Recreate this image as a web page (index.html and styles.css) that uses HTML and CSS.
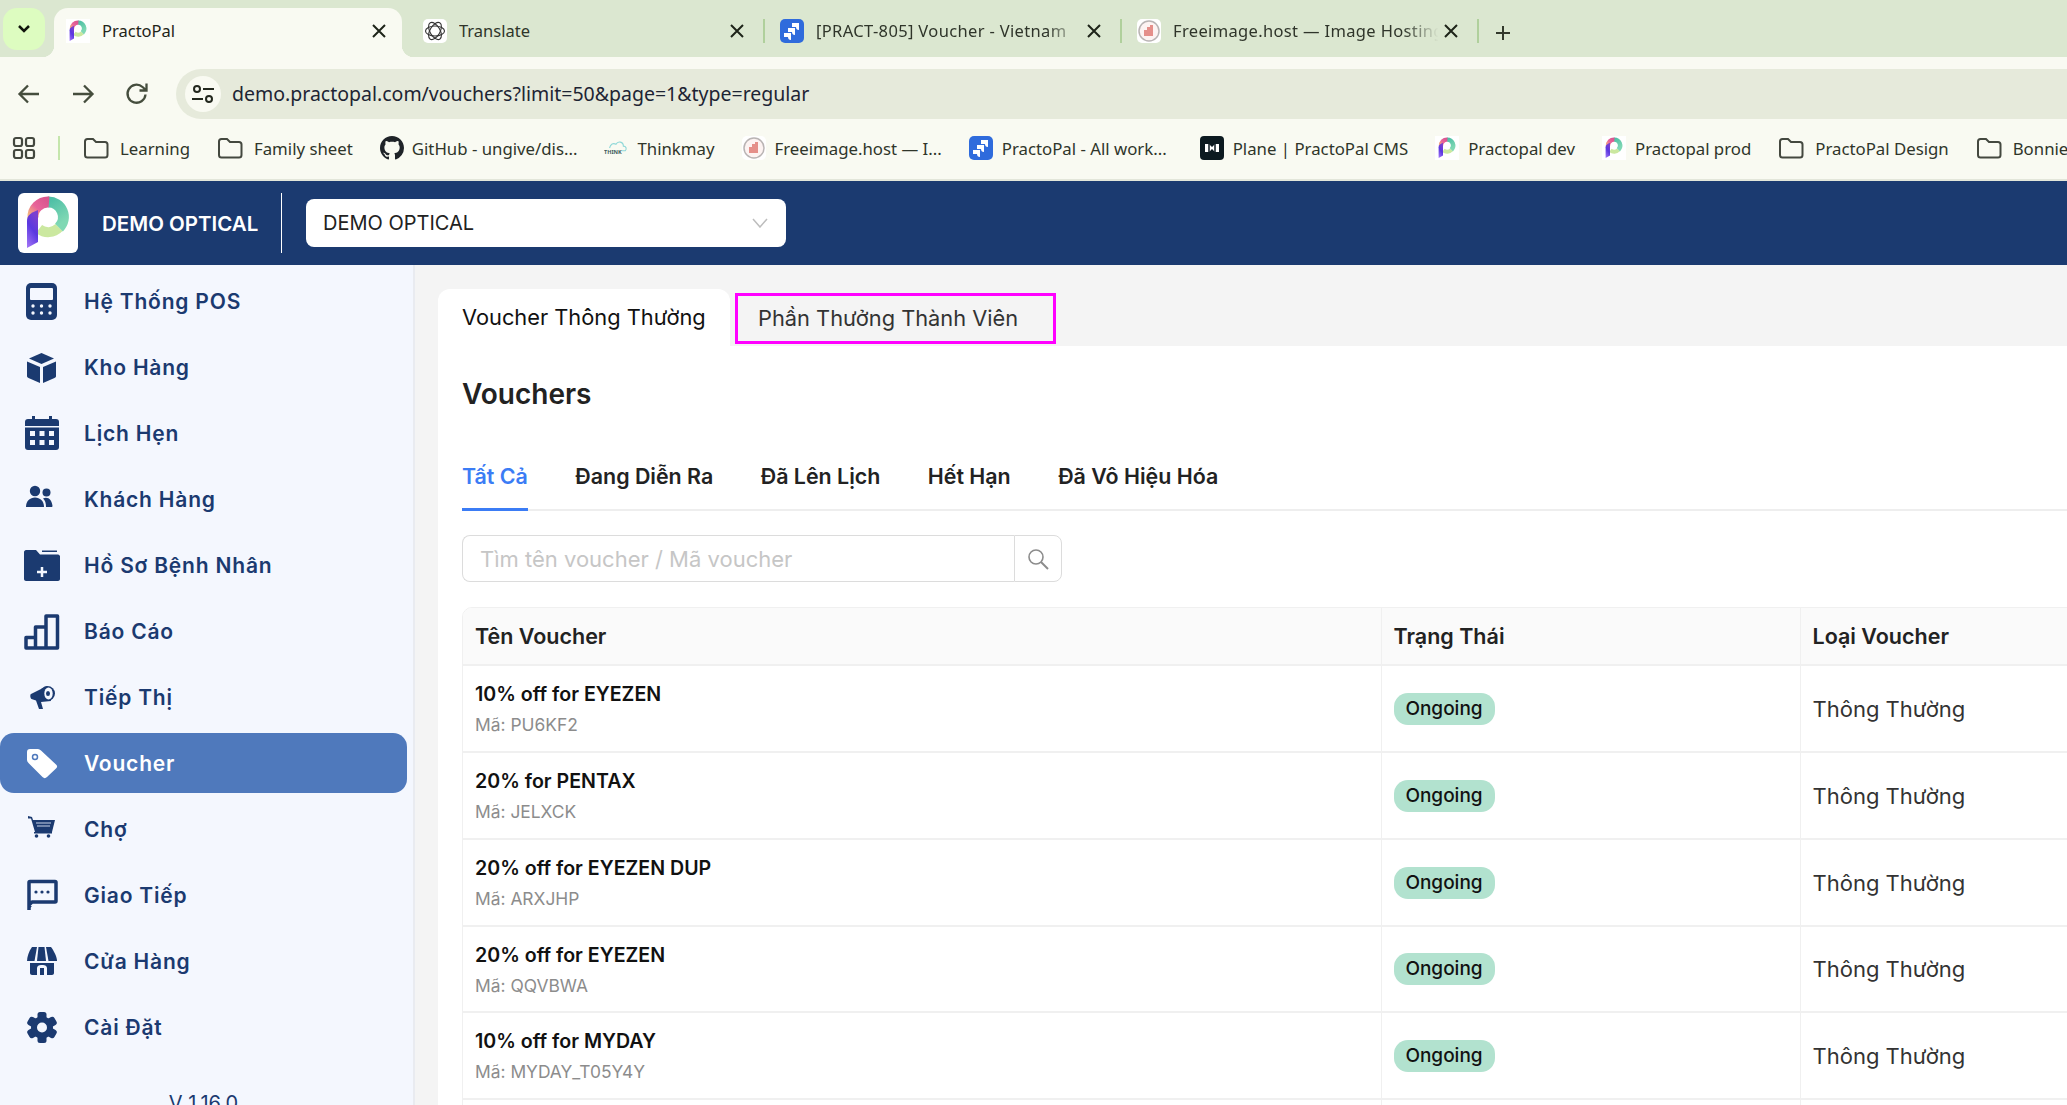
FILE: index.html
```html
<!DOCTYPE html>
<html lang="vi">
<head>
  <meta charset="UTF-8" />
  <title>PractoPal - Vouchers</title>
  <link rel="stylesheet" href="styles.css">
</head>
<body>

<svg class="defs" width="0" height="0">
  <defs>
    <linearGradient id="stem-grad" x1="0" y1="1" x2="0.4" y2="0">
      <stop offset="0" stop-color="#a678f7"/>
      <stop offset="0.6" stop-color="#5a38e0"/>
      <stop offset="1" stop-color="#7a3fd0"/>
    </linearGradient>
    <linearGradient id="pink-grad" x1="0" y1="1" x2="1" y2="0">
      <stop offset="0" stop-color="#f3b27e"/>
      <stop offset="0.45" stop-color="#e8649a"/>
      <stop offset="1" stop-color="#d9568f"/>
    </linearGradient>
    <linearGradient id="teal-grad" x1="0" y1="0" x2="0.4" y2="1">
      <stop offset="0" stop-color="#4fbfa6"/>
      <stop offset="1" stop-color="#7fd8b4"/>
    </linearGradient>
    <symbol id="logo" viewBox="0 0 60 60">
      <path d="M41 34.600A15 15 0 0 1 21 36" fill="none" stroke="#cbe8a0" stroke-width="10"/>
      <path d="M30 9A15 15 0 0 1 41 34.600" fill="none" stroke="url(#teal-grad)" stroke-width="11"/>
      <path d="M15 25A15 15 0 0 1 31 9" fill="none" stroke="url(#pink-grad)" stroke-width="11"/>
      <path d="M9 55V28C9 23 12 20 20 17V49Z" fill="url(#stem-grad)"/>
    </symbol>
    <symbol id="folder" viewBox="0 0 26 24">
      <path d="M2 5.500C2 4 3 3 4.500 3H10L13 6H22C23.500 6 24.500 7 24.500 8.500V19C24.500 20.500 23.500 21.500 22 21.500H4.500C3 21.500 2 20.500 2 19Z" fill="none" stroke="#44483f" stroke-width="2"/>
    </symbol>
    <symbol id="jira" viewBox="0 0 24 24">
      <rect width="24" height="24" rx="5" fill="#2f6bdc"/>
      <path d="M12 4h7v7c-2 0-3-1-3-3h-4zM8 9h7v7c-2 0-3-1-3-3H8zM4 14h7v7c-2 0-3-1-3-3H4z" fill="#fff"/>
    </symbol>
    <symbol id="freeimage" viewBox="0 0 24 24">
      <rect width="24" height="24" rx="5" fill="#fff"/>
      <circle cx="12" cy="12" r="10" fill="#fdf3f2" stroke="#b9b4b4" stroke-width="1.500"/>
      <path d="M7 17V11h3V8h3V6h3v11z" fill="#e58f8a"/>
    </symbol>
    <symbol id="openai" viewBox="0 0 24 24">
      <rect width="24" height="24" rx="5" fill="#fff"/>
      <g fill="none" stroke="#333" stroke-width="1.100">
        <ellipse cx="12" cy="12" rx="9.500" ry="5"/>
        <ellipse cx="12" cy="12" rx="9.500" ry="5" transform="rotate(60 12 12)"/>
        <ellipse cx="12" cy="12" rx="9.500" ry="5" transform="rotate(120 12 12)"/>
      </g>
    </symbol>
    <symbol id="close" viewBox="0 0 20 20">
      <path d="M4 4L16 16M16 4L4 16" fill="none" stroke="#1e2419" stroke-width="2"/>
    </symbol>
  </defs>
</svg>

<div class="browser">
  <div class="tabstrip">
    <div class="tab-search">
      <svg width="16" height="10" viewBox="0 0 16 10"><path d="M3 2L8 7L13 2" fill="none" stroke="#10140c" stroke-width="2.500"/></svg>
    </div>
    <div class="tab tab-active">
      <svg class="favicon"><rect width="24" height="24" fill="#fff"/><use href="#logo"/></svg>
      <span class="tab-title">PractoPal</span>
      <svg class="tab-close"><use href="#close"/></svg>
    </div>
    <div class="tab">
      <svg class="favicon"><use href="#openai"/></svg>
      <span class="tab-title">Translate</span>
      <svg class="tab-close"><use href="#close"/></svg>
      <span class="tab-sep"></span>
    </div>
    <div class="tab">
      <svg class="favicon"><use href="#jira"/></svg>
      <span class="tab-title tab-fade">[PRACT-805] Voucher - Vietnam</span>
      <svg class="tab-close"><use href="#close"/></svg>
      <span class="tab-sep"></span>
    </div>
    <div class="tab">
      <svg class="favicon"><use href="#freeimage"/></svg>
      <span class="tab-title tab-fade">Freeimage.host — Image Hosting</span>
      <svg class="tab-close"><use href="#close"/></svg>
      <span class="tab-sep"></span>
    </div>
    <svg class="tab-new" width="20" height="20" viewBox="0 0 20 20"><path d="M10 3V17M3 10H17" stroke="#33392c" stroke-width="2"/></svg>
  </div>

  <div class="toolbar">
    <svg class="tool-btn" viewBox="0 0 24 24"><path d="M22 12H3M11 3.500L2.500 12L11 20.500" fill="none" stroke="#454d3d" stroke-width="2.300"/></svg>
    <svg class="tool-btn" viewBox="0 0 24 24"><path d="M2 12H21M13 3.500L21.500 12L13 20.500" fill="none" stroke="#454d3d" stroke-width="2.300"/></svg>
    <svg class="tool-btn" viewBox="0 0 24 24"><path d="M20.500 12.500A9 9 0 1 1 17.500 5L21 8M21.500 1.500V8.500H14.500" fill="none" stroke="#454d3d" stroke-width="2.300"/></svg>
    <div class="omnibox">
      <div class="site-chip">
        <svg width="24" height="24" viewBox="0 0 24 24">
          <g fill="none" stroke="#23281e" stroke-width="2">
            <circle cx="6" cy="7" r="3"/><path d="M12 7H23"/>
            <circle cx="18" cy="17" r="3"/><path d="M1 17H12"/>
          </g>
        </svg>
      </div>
      <span class="url">demo.practopal.com/vouchers?limit=50&amp;page=1&amp;type=regular</span>
    </div>
  </div>

  <div class="bookmarks">
    <svg class="apps" width="24" height="24" viewBox="0 0 24 24">
      <g fill="none" stroke="#44483f" stroke-width="2.200">
        <rect x="2" y="2" width="8" height="8" rx="2"/><rect x="14" y="2" width="8" height="8" rx="2"/>
        <rect x="2" y="14" width="8" height="8" rx="2"/><rect x="14" y="14" width="8" height="8" rx="2"/>
      </g>
    </svg>
    <span class="bm-sep"></span>
    <a class="bm"><svg class="bm-folder"><use href="#folder"/></svg>Learning</a>
    <a class="bm"><svg class="bm-folder"><use href="#folder"/></svg>Family sheet</a>
    <a class="bm bm-github">
      <svg class="bm-icon" viewBox="0 0 16 16"><path fill="#1f2328" d="M8 0C3.580 0 0 3.580 0 8c0 3.540 2.290 6.530 5.470 7.590.4.070.55-.17.55-.38 0-.19-.01-.82-.01-1.490-2.010.37-2.530-.49-2.690-.94-.09-.23-.48-.94-.82-1.130-.28-.15-.68-.52-.01-.53.63-.01 1.080.58 1.230.82.72 1.210 1.870.87 2.330.66.07-.52.28-.87.51-1.070-1.780-.2-3.640-.89-3.640-3.950 0-.87.31-1.590.82-2.150-.08-.2-.36-1.020.08-2.120 0 0 .67-.21 2.200.82.64-.18 1.320-.27 2-.27.68 0 1.360.09 2 .27 1.530-1.040 2.200-.82 2.200-.82.44 1.100.16 1.920.08 2.120.51.56.82 1.270.82 2.150 0 3.070-1.870 3.750-3.650 3.950.29.25.54.73.54 1.480 0 1.070-.01 1.930-.01 2.200 0 .21.15.46.55.38A8.013 8.013 0 0016 8c0-4.420-3.580-8-8-8z"/></svg>
      GitHub - ungive/dis...
    </a>
    <a class="bm bm-think">
      <svg class="bm-icon" viewBox="0 0 26 24">
        <path d="M6 12C7 8 10 6 13 8C15 4 21 5 21 10C24 10 25 13 23 15H19" fill="none" stroke="#8fd8d8" stroke-width="1.200"/>
        <text x="0" y="18" class="think-label">THINK</text>
      </svg>
      Thinkmay
    </a>
    <a class="bm"><svg class="bm-icon"><use href="#freeimage"/></svg>Freeimage.host — I...</a>
    <a class="bm bm-jira"><svg class="bm-icon"><use href="#jira"/></svg>PractoPal - All work...</a>
    <a class="bm">
      <svg class="bm-icon" viewBox="0 0 24 24">
        <rect width="24" height="24" rx="4" fill="#0c1a20"/>
        <path d="M5 8h4l3 3 3-3h4v8h-4l-3-3-3 3H5z" fill="#fff"/>
        <path d="M9 8v8M15 8v8" stroke="#0c1a20" stroke-width="1.500"/>
      </svg>
      Plane | PractoPal CMS
    </a>
    <a class="bm"><svg class="bm-icon"><rect width="24" height="24" fill="#fff"/><use href="#logo"/></svg>Practopal dev</a>
    <a class="bm"><svg class="bm-icon"><rect width="24" height="24" fill="#fff"/><use href="#logo"/></svg>Practopal prod</a>
    <a class="bm"><svg class="bm-folder"><use href="#folder"/></svg>PractoPal Design</a>
    <a class="bm"><svg class="bm-folder"><use href="#folder"/></svg>Bonnie</a>
  </div>
</div>

<header class="app-header">
  <div class="app-logo"><svg width="60" height="60"><use href="#logo"/></svg></div>
  <div class="org-name">DEMO OPTICAL</div>
  <span class="header-divider"></span>
  <div class="org-select">
    <span>DEMO OPTICAL</span>
    <svg width="16" height="10" viewBox="0 0 16 10"><path d="M1 1L8 9L15 1" fill="none" stroke="#bdbdbd" stroke-width="1.500"/></svg>
  </div>
</header>

<div class="app-body">
  <nav class="sidebar">
    <a class="nav-item">
      <svg class="nav-icon" viewBox="0 0 36 36">
        <rect x="3" y="0" width="31" height="37" rx="5"/>
        <rect x="7" y="5" width="23" height="12" rx="1" class="cut"/>
        <g class="cut">
          <circle cx="10" cy="23" r="1.700"/><circle cx="18.500" cy="23" r="1.700"/><circle cx="27" cy="23" r="1.700"/>
          <circle cx="10" cy="30" r="1.700"/><circle cx="18.500" cy="30" r="1.700"/><circle cx="27" cy="30" r="1.700"/>
        </g>
      </svg>
      <span>Hệ Thống POS</span>
    </a>
    <a class="nav-item">
      <svg class="nav-icon" viewBox="0 0 36 36">
        <path d="M18.500 4L31 9.500L18.500 15L6 9.500Z"/>
        <path d="M4 12.500L17 18V34L5.500 29C4.500 28.500 4 28 4 27Z"/>
        <path d="M33 12.500L20 18V34L31.500 29C32.500 28.500 33 28 33 27Z"/>
      </svg>
      <span>Kho Hàng</span>
    </a>
    <a class="nav-item">
      <svg class="nav-icon" viewBox="0 0 36 36">
        <rect x="2" y="4" width="34" height="31" rx="3"/>
        <rect x="9" y="1" width="3" height="6"/><rect x="26" y="1" width="3" height="6"/>
        <rect x="2" y="11" width="34" height="1.500" class="cut"/>
        <g class="cut">
          <rect x="7" y="16" width="5" height="5"/><rect x="16.500" y="16" width="5" height="5"/><rect x="26" y="16" width="5" height="5"/>
          <rect x="7" y="25" width="5" height="5"/><rect x="16.500" y="25" width="5" height="5"/><rect x="26" y="25" width="5" height="5"/>
        </g>
      </svg>
      <span>Lịch Hẹn</span>
    </a>
    <a class="nav-item">
      <svg class="nav-icon" viewBox="0 0 36 36">
        <circle cx="12" cy="10" r="5.200"/><circle cx="23.500" cy="11.500" r="4"/>
        <path d="M3 26C3 20 7 16.500 12 16.500S21 20 21 26Z"/>
        <path d="M23 26C23 22 22 19 20 17.500C25 15 29 19 29.500 25C29.500 25.700 29 26 28.500 26Z"/>
      </svg>
      <span>Khách Hàng</span>
    </a>
    <a class="nav-item">
      <svg class="nav-icon" viewBox="0 0 36 36">
        <path d="M1 5C1 4 2 3 3 3H13L17 7.500H35C36 7.500 37 8.500 37 9.500V32C37 33 36 34 35 34H3C2 34 1 33 1 32Z"/>
        <rect x="19" y="3.500" width="15" height="1.500"/>
        <path d="M19 20V30M14 25H24" class="cut-line"/>
      </svg>
      <span>Hồ Sơ Bệnh Nhân</span>
    </a>
    <a class="nav-item">
      <svg class="nav-icon" viewBox="0 0 36 36">
        <path d="M3 24.500H12.500V14H23V3H34.500V35H3ZM12.500 35V24.500M23 35V14" fill="none" class="stroke-line"/>
      </svg>
      <span>Báo Cáo</span>
    </a>
    <a class="nav-item">
      <svg class="nav-icon" viewBox="0 0 36 36">
        <path d="M8 15C7 15.500 7 19 8.500 20L13 21.500L16 30H20L18 23L28 22L24 7Z"/>
        <circle cx="24.500" cy="14.500" r="7.500"/>
        <ellipse cx="25.500" cy="14.500" rx="4.200" ry="6" class="cut"/>
        <ellipse cx="25" cy="14.500" rx="2" ry="2.500"/>
      </svg>
      <span>Tiếp Thị</span>
    </a>
    <a class="nav-item nav-active">
      <svg class="nav-icon" viewBox="0 0 36 36">
        <path d="M4 7C4 5 5 4 7 4H15C16 4 17 4.500 18 5.500L33 19.500C34.500 21 34.500 22 33 23.500L24 32C22.500 33.500 21 33.500 19.500 32L5.500 18C4.500 17 4 16 4 15Z"/>
        <circle cx="12" cy="12" r="2.500" class="tag-hole"/>
      </svg>
      <span>Voucher</span>
    </a>
    <a class="nav-item">
      <svg class="nav-icon" viewBox="0 0 36 36">
        <path d="M5 5L9 6L10 9H32L29 21H12L8 7.500L5 7.500Z"/>
        <rect x="11" y="21" width="18" height="1.500"/>
        <path d="M13 12H28M14 15H27" class="cut-thin"/>
        <circle cx="13.500" cy="25" r="1.800"/><circle cx="25.500" cy="25" r="1.800"/>
      </svg>
      <span>Chợ</span>
    </a>
    <a class="nav-item">
      <svg class="nav-icon" viewBox="0 0 36 36">
        <path d="M6 33V5.500C6 5 6.500 4.500 7 4.500H32C32.500 4.500 33 5 33 5.500V24C33 24.500 32.500 25 32 25H9L6 28" fill="none" class="stroke-line"/>
        <path d="M5 33V29H9Z"/>
        <circle cx="13" cy="15" r="1.600"/><circle cx="19" cy="15" r="1.600"/><circle cx="25" cy="15" r="1.600"/>
      </svg>
      <span>Giao Tiếp</span>
    </a>
    <a class="nav-item">
      <svg class="nav-icon" viewBox="0 0 36 36">
        <path d="M9 4H14L11.500 18H4C4 14 6 8 9 4Z"/>
        <path d="M15.500 4H21.500L23 18H14Z"/>
        <path d="M23 4H28C31 8 34 14 34 18H25.500Z"/>
        <path d="M7 20H31V30C31 31 30 32 29 32H24V25C24 23 22 22 20 22H18C16 22 14 23 14 25V32H9C8 32 7 31 7 30Z"/>
        <rect x="17" y="25" width="4" height="7"/>
      </svg>
      <span>Cửa Hàng</span>
    </a>
    <a class="nav-item">
      <svg class="nav-icon" viewBox="0 0 36 36">
        <g>
          <rect x="14.500" y="3" width="9" height="31" rx="2.500"/>
          <rect x="14.500" y="3" width="9" height="31" rx="2.500" transform="rotate(60 19 18.500)"/>
          <rect x="14.500" y="3" width="9" height="31" rx="2.500" transform="rotate(120 19 18.500)"/>
          <circle cx="19" cy="18.500" r="11"/>
        </g>
        <circle cx="19" cy="18.500" r="5" class="cut"/>
      </svg>
      <span>Cài Đặt</span>
    </a>
    <div class="version">V 1.16.0</div>
  </nav>

  <main class="content">
    <div class="page-tabs">
      <div class="page-tab page-tab-active">Voucher Thông Thường</div>
      <div class="page-tab page-tab-marked">Phần Thưởng Thành Viên</div>
    </div>
    <div class="card">
      <h1 class="card-title">Vouchers</h1>
      <div class="status-tabs">
        <a class="status-tab status-active">Tất Cả</a>
        <a class="status-tab">Đang Diễn Ra</a>
        <a class="status-tab">Đã Lên Lịch</a>
        <a class="status-tab">Hết Hạn</a>
        <a class="status-tab">Đã Vô Hiệu Hóa</a>
      </div>
      <div class="search-box">
        <input class="search-input" placeholder="Tìm tên voucher / Mã voucher" />
        <button class="search-btn">
          <svg width="24" height="24" viewBox="0 0 24 24"><circle cx="10" cy="10" r="7" fill="none" stroke="#8c8c8c" stroke-width="1.600"/><path d="M15 15L22 22" stroke="#8c8c8c" stroke-width="2"/></svg>
        </button>
      </div>
      <div class="table-wrap">
        <table class="voucher-table">
          <colgroup><col class="col-name"><col class="col-status"><col></colgroup>
          <thead>
            <tr><th>Tên Voucher</th><th>Trạng Thái</th><th>Loại Voucher</th></tr>
          </thead>
          <tbody>
            <tr>
              <td><div class="v-name">10% off for EYEZEN</div><div class="v-code">Mã: PU6KF2</div></td>
              <td><span class="badge">Ongoing</span></td>
              <td class="v-type">Thông Thường</td>
            </tr>
            <tr>
              <td><div class="v-name">20% for PENTAX</div><div class="v-code">Mã: JELXCK</div></td>
              <td><span class="badge">Ongoing</span></td>
              <td class="v-type">Thông Thường</td>
            </tr>
            <tr>
              <td><div class="v-name">20% off for EYEZEN DUP</div><div class="v-code">Mã: ARXJHP</div></td>
              <td><span class="badge">Ongoing</span></td>
              <td class="v-type">Thông Thường</td>
            </tr>
            <tr class="row-short">
              <td><div class="v-name">20% off for EYEZEN</div><div class="v-code">Mã: QQVBWA</div></td>
              <td><span class="badge">Ongoing</span></td>
              <td class="v-type">Thông Thường</td>
            </tr>
            <tr>
              <td><div class="v-name">10% off for MYDAY</div><div class="v-code">Mã: MYDAY_T05Y4Y</div></td>
              <td><span class="badge">Ongoing</span></td>
              <td class="v-type">Thông Thường</td>
            </tr>
            <tr><td></td><td></td><td></td></tr>
          </tbody>
        </table>
      </div>
    </div>
  </main>
</div>

</body>
</html>
```
FILE: styles.css
```css
html, body {
  margin: 0;
  height: 1105px;
  overflow: hidden;
}
body {
  width: 2067px;
  font-family: 'Inter', 'Noto Sans', sans-serif;
  background-color: #f4f4f4;
  color: #222;
}
.defs {
  position: absolute;
}

/* browser frame */
.browser {
  font-family: 'Noto Sans', 'Open Sans', sans-serif;
  background-color: #f9faf2;
  color: #2f352a;
}
.tabstrip {
  display: flex;
  align-items: flex-end;
  height: 57px;
  padding-left: 3px;
  background-color: #dbe7d0;
}
.tab-search {
  display: flex;
  align-items: center;
  justify-content: center;
  width: 42px;
  height: 42px;
  margin: 0 9px 7px 0;
  border-radius: 14px;
  background-color: #ddfcc0;
}
.tab {
  display: flex;
  align-items: center;
  box-sizing: border-box;
  width: 357px;
  height: 49px;
  padding: 0 3px 4px 12px;
  font-size: 16.500px;
}
.tab-active {
  position: relative;
  width: 348px;
  margin-right: 9px;
  padding-right: 13px;
  border-radius: 14px 14px 0 0;
  background-color: #f9faf2;
  color: #1f2419;
}
.tab-active::before,
.tab-active::after {
  content: "";
  position: absolute;
  bottom: 0;
  width: 12px;
  height: 12px;
}
.tab-active::before {
  left: -12px;
  background: radial-gradient(circle at 0 0, transparent 12px, #f9faf2 12.500px);
}
.tab-active::after {
  right: -12px;
  background: radial-gradient(circle at 100% 0, transparent 12px, #f9faf2 12.500px);
}
.favicon {
  width: 24px;
  height: 24px;
  margin-right: 12px;
  flex: none;
}
.tab-title {
  flex: 1;
  overflow: hidden;
  white-space: nowrap;
}
.tab-fade {
  letter-spacing: 0.350px;
  -webkit-mask-image: linear-gradient(to right, #000 86%, transparent 99%);
  mask-image: linear-gradient(to right, #000 86%, transparent 99%);
}
.tab-close {
  width: 20px;
  height: 20px;
  flex: none;
}
.tab-sep {
  width: 2px;
  height: 24px;
  margin-left: 16px;
  flex: none;
  background-color: #b0d09c;
}
.tab-new {
  margin: 0 0 14px 11px;
  flex: none;
}

.toolbar {
  display: flex;
  align-items: center;
  gap: 30px;
  box-sizing: border-box;
  height: 65px;
  padding: 8px 0 0 17px;
  overflow: hidden;
}
.tool-btn {
  width: 24px;
  height: 24px;
  flex: none;
}
.omnibox {
  display: flex;
  align-items: center;
  gap: 11px;
  flex: none;
  width: 2000px;
  height: 50px;
  margin-left: -3px;
  padding-left: 9px;
  border-radius: 25px 0 0 25px;
  background-color: #e6eadb;
  font-size: 19.500px;
  color: #1d2433;
}
.site-chip {
  display: flex;
  align-items: center;
  justify-content: center;
  width: 36px;
  height: 36px;
  border-radius: 50%;
  background-color: #f9faf2;
}

.bookmarks {
  display: flex;
  align-items: center;
  box-sizing: border-box;
  height: 59px;
  padding: 0 0 5px 12px;
  overflow: hidden;
  border-bottom: 2px solid #e3e6da;
  font-size: 16.800px;
  white-space: nowrap;
}
.apps {
  flex: none;
}
.bm-sep {
  width: 2px;
  height: 24px;
  margin: 0 23px 0 22px;
  flex: none;
  background-color: #c5e6ac;
}
.bm {
  display: flex;
  align-items: center;
  margin-right: 27px;
  flex: none;
}
.bm-folder {
  width: 26px;
  height: 24px;
  margin-right: 11px;
}
.bm-icon {
  width: 24px;
  height: 24px;
  margin-right: 9px;
}
.bm-github .bm-icon {
  margin-right: 8px;
}
.bm-jira {
  margin-right: 33px;
}
.think-label {
  font-size: 6px;
  font-weight: 700;
  fill: #3c5a5a;
}

/* app header */
.app-header {
  display: flex;
  align-items: center;
  height: 84px;
  padding-left: 18px;
  background-color: #1b3a70;
}
.app-logo {
  width: 60px;
  height: 60px;
  margin-right: 24px;
  border-radius: 6px;
  background-color: #fff;
}
.org-name {
  width: 179px;
  font-size: 20.500px;
  font-weight: 600;
  color: #fff;
  white-space: nowrap;
}
.header-divider {
  width: 1px;
  height: 60px;
  margin-right: 24px;
  background-color: #fff;
}
.org-select {
  display: flex;
  align-items: center;
  justify-content: space-between;
  box-sizing: border-box;
  width: 480px;
  height: 48px;
  padding: 0 18px 0 17px;
  border-radius: 8px;
  background-color: #fff;
  font-size: 20px;
  color: #222;
}

.app-body {
  display: flex;
  height: 840px;
}

/* sidebar */
.sidebar {
  display: flex;
  flex-direction: column;
  gap: 6px;
  box-sizing: content-box;
  width: 413px;
  padding-top: 6px;
  overflow: hidden;
  flex: none;
  border-right: 2px solid #e9ebf0;
  background-color: #f4f7fe;
}
.nav-item {
  display: flex;
  align-items: center;
  width: 407px;
  height: 60px;
  flex: none;
  border-radius: 14px;
  font-size: 21px;
  font-weight: 600;
  letter-spacing: 0.800px;
  color: #1b3a70;
}
.nav-icon {
  width: 36px;
  height: 36px;
  margin: 0 25px 0 23px;
  flex: none;
  overflow: visible;
  fill: #1b3a70;
}
.nav-icon .cut {
  fill: #f4f7fe;
}
.nav-icon .cut-line {
  fill: none;
  stroke: #f4f7fe;
  stroke-width: 2.500;
}
.nav-icon .cut-thin {
  fill: none;
  stroke: #c9d4e8;
  stroke-width: 1.200;
}
.nav-icon .stroke-line {
  stroke: #1b3a70;
  stroke-width: 3.500;
  stroke-linejoin: round;
}
.nav-active {
  background-color: #4f79bc;
  color: #fff;
}
.nav-active .nav-icon {
  fill: #fff;
}
.tag-hole {
  fill: #fff;
  stroke: #4f79bc;
  stroke-width: 1.500;
}
.version {
  margin-top: 25px;
  line-height: 30px;
  width: 407px;
  text-align: center;
  font-size: 20px;
  color: #1b3a70;
}

/* main content */
.content {
  flex: 1;
  padding: 24px 0 0 23px;
  overflow: hidden;
}
.page-tabs {
  display: flex;
  align-items: flex-start;
  height: 57px;
}
.page-tab {
  box-sizing: border-box;
  padding-left: 24px;
  font-size: 21.800px;
  line-height: 57px;
  white-space: nowrap;
  color: #222;
}
.page-tab-active {
  width: 292px;
  height: 57px;
  border-radius: 12px 12px 0 0;
  background-color: #fff;
  color: #111;
}
.page-tab-marked {
  width: 321px;
  height: 51px;
  margin: 4px 0 0 5px;
  padding-left: 20px;
  border: 3px solid #ff00ff;
  line-height: 44px;
  color: #333;
}
.card {
  width: 1700px;
  height: 760px;
  padding: 30px 0 0 24px;
  background-color: #fff;
}
.card-title {
  margin: 0;
  font-size: 28px;
  font-weight: 600;
  line-height: 36px;
  color: #222;
}
.status-tabs {
  display: flex;
  gap: 47.500px;
  margin-top: 49px;
  border-bottom: 2px solid #eeeeee;
}
.status-tab {
  height: 50px;
  margin-bottom: -2px;
  box-sizing: border-box;
  font-size: 21.400px;
  font-weight: 600;
  line-height: 30px;
  white-space: nowrap;
  color: #222;
}
.status-active {
  border-bottom: 3px solid #3b7cf5;
  color: #3b7cf5;
}
.search-box {
  display: flex;
  width: 600px;
  margin-top: 24px;
}
.search-input {
  box-sizing: border-box;
  width: 552px;
  height: 47px;
  padding: 0 17px;
  border: 1.500px solid #dcdcdc;
  border-right: none;
  border-radius: 8px 0 0 8px;
  outline: none;
  font-family: inherit;
  font-size: 22px;
}
.search-input::placeholder {
  color: #c6c6c6;
}
.search-btn {
  display: flex;
  align-items: center;
  justify-content: center;
  box-sizing: border-box;
  width: 48px;
  height: 47px;
  padding: 0;
  border: 1.500px solid #dcdcdc;
  border-radius: 0 8px 8px 0;
  background-color: #fff;
}
.table-wrap {
  width: 1676px;
  margin-top: 25px;
  border: 1px solid #f0f0f0;
  border-radius: 10px 10px 0 0;
  overflow: hidden;
}
.voucher-table {
  width: 100%;
  table-layout: fixed;
  border-collapse: collapse;
}
.col-name {
  width: 918px;
}
.col-status {
  width: 419px;
}
.voucher-table th {
  height: 56px;
  padding: 0 0 0 12px;
  background-color: #fafafa;
  border-right: 1px solid #f0f0f0;
  border-bottom: 2px solid #f0f0f0;
  text-align: left;
  font-size: 21.500px;
  font-weight: 600;
  color: #222;
}
.voucher-table td {
  height: 85px;
  padding: 0 0 0 12px;
  border-right: 1px solid #f0f0f0;
  border-bottom: 2px solid #f0f0f0;
}
.voucher-table .row-short td {
  height: 84px;
}
.v-name {
  font-size: 19.600px;
  font-weight: 600;
  line-height: 30px;
  color: #111;
}
.v-code {
  margin-top: 3px;
  font-size: 17.400px;
  line-height: 26px;
  color: #8c8c8c;
}
.badge {
  display: inline-block;
  width: 101px;
  height: 32px;
  border-radius: 14px;
  background-color: #b2e2cf;
  text-align: center;
  font-size: 19px;
  font-weight: 500;
  line-height: 32px;
  color: #111;
}
.v-type {
  font-size: 22px;
  color: #333;
}
```
